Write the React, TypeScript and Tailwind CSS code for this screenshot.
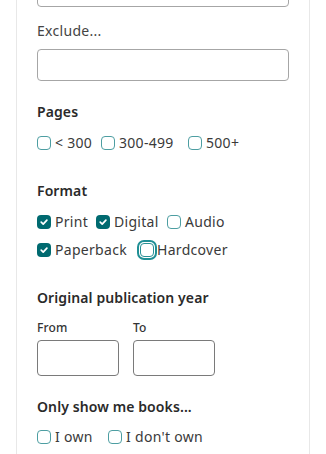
type BoxProps = { checked?: boolean; focused?: boolean };

function Box({ checked, focused }: BoxProps) {
  if (checked) {
    return (
      <span className="flex h-[14px] w-[14px] shrink-0 items-center justify-center rounded-[4px] bg-[#006a70]">
        <svg width="10" height="10" viewBox="0 0 10 10" fill="none">
          <path d="M2.2 5.2 L4.2 7.1 L7.9 3.1" stroke="#ffffff" strokeWidth="1.7" strokeLinecap="round" strokeLinejoin="round" />
        </svg>
      </span>
    );
  }
  return (
    <span
      className={
        focused
          ? "block h-[14px] w-[14px] shrink-0 rounded-[4px] border border-[#2a9196] bg-white ring-2 ring-[#1f8f95] ring-offset-1 ring-offset-white"
          : "block h-[14px] w-[14px] shrink-0 rounded-[4px] border border-[#4d9ea2] bg-white"
      }
    />
  );
}

function Item({ label, checked, focused, w, gap = "gap-1" }: { label: string; checked?: boolean; focused?: boolean; w?: string; gap?: string }) {
  return (
    <label className={`flex items-center ${gap} ${w ?? ""}`}>
      <Box checked={checked} focused={focused} />
      <span className="text-[14px] leading-5 tracking-[0.3px] text-[#3a3a3a]">{label}</span>
    </label>
  );
}

export default function App() {
  return (
    <div className="h-[454px] w-[326px] overflow-hidden bg-white font-['Noto_Sans',sans-serif]">
      <div className="-mt-[25px] ml-[16px] flex h-[479px] w-[294px] flex-col border-x border-[#e8e8e8] px-5">
        <div className="h-8 w-full rounded-[4px] border border-[#a6a6a6]" />
        <div className="mt-[14px] text-[14px] leading-5 tracking-[0.3px] text-[#444]">Exclude...</div>
        <div className="mt-2 h-8 w-full rounded-[4px] border border-[#a6a6a6]" />

        <div className="mt-[21px] text-[14px] font-semibold leading-5 tracking-[0.1px] text-[#2a2a2a]">Pages</div>
        <div className="mt-[11px] flex h-5 items-center">
          <Item label="< 300" w="w-[64px]" />
          <Item label="300-499" w="w-[87px]" />
          <Item label="500+" />
        </div>

        <div className="mt-7 text-[14px] font-semibold leading-5 tracking-[0.1px] text-[#2a2a2a]">Format</div>
        <div className="mt-[11px] flex h-5 items-center">
          <Item label="Print" checked w="w-[59px]" />
          <Item label="Digital" checked w="w-[71px]" />
          <Item label="Audio" />
        </div>
        <div className="mt-2 flex h-5 items-center">
          <Item label="Paperback" checked w="w-[103px]" />
          <Item label="Hardcover" focused gap="gap-[3px]" />
        </div>

        <div className="mt-7 text-[14px] font-semibold leading-5 tracking-[0.1px] text-[#2a2a2a]">Original publication year</div>
        <div className="mt-3 flex gap-[14px]">
          <div className="flex w-[82px] flex-col">
            <span className="text-[12px] font-medium leading-4 tracking-[0.2px] text-[#333]">From</span>
            <div className="mt-1 h-9 w-full rounded-[4px] border border-[#7a7a7a]" />
          </div>
          <div className="flex w-[82px] flex-col">
            <span className="text-[12px] font-medium leading-4 tracking-[0.2px] text-[#333]">To</span>
            <div className="mt-1 h-9 w-full rounded-[4px] border border-[#7a7a7a]" />
          </div>
        </div>

        <div className="mt-[21px] text-[14px] font-semibold leading-5 tracking-[0.1px] text-[#2a2a2a]">Only show me books...</div>
        <div className="mt-[10px] flex h-5 items-center">
          <Item label="I own" w="w-[71px]" />
          <Item label="I don't own" />
        </div>
      </div>
    </div>
  );
}
